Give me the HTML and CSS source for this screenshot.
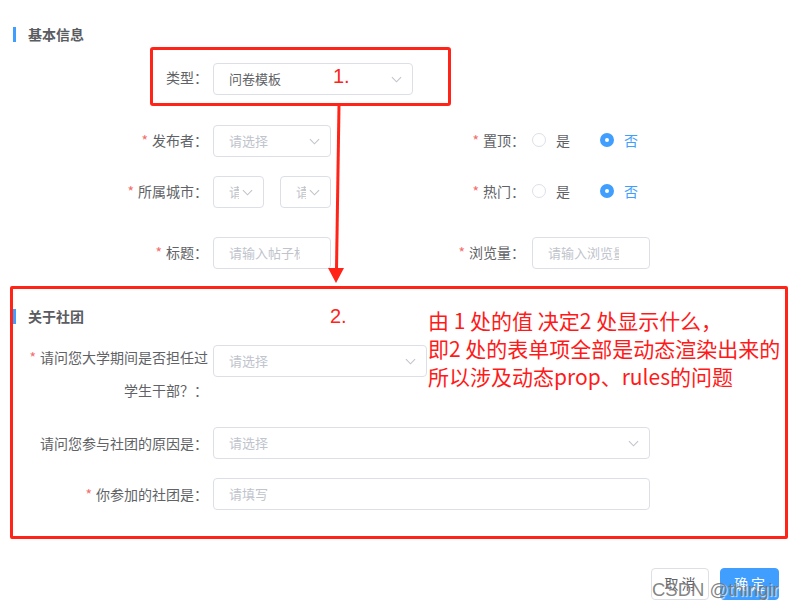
FILE: index.html
```html
<!DOCTYPE html>
<html lang="zh-CN">
<head>
  <meta charset="UTF-8">
  <title>动态表单</title>
  <link rel="stylesheet" href="styles.css">
</head>
<body>
  <div class="page">
    <div class="section-title">基本信息</div>

    <div class="type-box">
      <label class="label type-label">类型：</label>
      <div class="select w-200">
        <span class="value">问卷模板</span>
        <svg class="arrow" viewBox="0 0 12 7"><polyline points="1,1 6,6 11,1"/></svg>
      </div>
    </div>

    <div class="row gap-19">
      <div class="item left">
        <label class="label"><i class="req">*</i>发布者：</label>
        <div class="select w-118">
          <span class="placeholder">请选择</span>
          <svg class="arrow" viewBox="0 0 12 7"><polyline points="1,1 6,6 11,1"/></svg>
        </div>
      </div>
      <div class="item right">
        <label class="label"><i class="req">*</i>置顶：</label>
        <div class="radios">
          <span class="radio"><span class="dot"></span>是</span>
          <span class="radio checked"><span class="dot"></span>否</span>
        </div>
      </div>
    </div>

    <div class="row gap-19">
      <div class="item left">
        <label class="label"><i class="req">*</i>所属城市：</label>
        <div class="select w-51">
          <span class="placeholder">请选择</span>
          <svg class="arrow" viewBox="0 0 12 7"><polyline points="1,1 6,6 11,1"/></svg>
        </div>
        <div class="select w-51 ml-16">
          <span class="placeholder">请选择</span>
          <svg class="arrow" viewBox="0 0 12 7"><polyline points="1,1 6,6 11,1"/></svg>
        </div>
      </div>
      <div class="item right">
        <label class="label"><i class="req">*</i>热门：</label>
        <div class="radios">
          <span class="radio"><span class="dot"></span>是</span>
          <span class="radio checked"><span class="dot"></span>否</span>
        </div>
      </div>
    </div>

    <div class="row gap-29">
      <div class="item left">
        <label class="label"><i class="req">*</i>标题：</label>
        <div class="input w-118"><span class="placeholder">请输入帖子标题</span></div>
      </div>
      <div class="item right">
        <label class="label"><i class="req">*</i>浏览量：</label>
        <div class="input w-118"><span class="placeholder">请输入浏览量</span></div>
      </div>
    </div>

    <div class="club-box">
      <div class="section-title inner">关于社团</div>

      <div class="row club-row first">
        <label class="label club-label tall"><i class="req">*</i>请问您大学期间是否担任过<br>学生干部？：</label>
        <div class="select w-214">
          <span class="placeholder">请选择</span>
          <svg class="arrow" viewBox="0 0 12 7"><polyline points="1,1 6,6 11,1"/></svg>
        </div>
      </div>

      <div class="row club-row">
        <label class="label club-label">请问您参与社团的原因是：</label>
        <div class="select w-437">
          <span class="placeholder">请选择</span>
          <svg class="arrow" viewBox="0 0 12 7"><polyline points="1,1 6,6 11,1"/></svg>
        </div>
      </div>

      <div class="row club-row">
        <label class="label club-label"><i class="req">*</i>你参加的社团是：</label>
        <div class="input w-437"><span class="placeholder">请填写</span></div>
      </div>
    </div>

    <div class="actions">
      <button class="btn">取 消</button>
      <button class="btn primary">确 定</button>
    </div>

    <!-- annotations drawn over the form -->
    <svg class="pointer" width="795" height="612" viewBox="0 0 795 612">
      <line x1="339" y1="105" x2="336.5" y2="270" stroke="#ff2318" stroke-width="3"/>
      <polygon points="328,268 344,268 336,283" fill="#ff2318"/>
    </svg>
    <span class="mark mark-1">1.</span>
    <span class="mark mark-2">2.</span>
    <p class="note">由 1 处的值 决定2 处显示什么，<br>即2 处的表单项全部是动态渲染出来的<br>所以涉及动态prop、rules的问题</p>
    <span class="watermark">CSDN @thingir</span>
  </div>
</body>
</html>
```

FILE: styles.css
```css
body {
  margin: 0;
  background: #fff;
  font-family: "Noto Sans CJK SC", "Noto Sans", sans-serif;
  color: #606266;
}
.page {
  position: relative;
  width: 795px;
  height: 612px;
  overflow: hidden;
}
.section-title {
  margin: 27px 0 0 13px;
  height: 15px;
  line-height: 14px;
  border-left: 3px solid #409eff;
  padding-left: 12px;
  font-size: 14px;
  font-weight: bold;
  color: #5a5c61;
}
.section-title.inner {
  margin: 20px 0 0 0;
}

/* form rows */
.type-box {
  box-sizing: border-box;
  margin: 5px 0 0 150px;
  width: 301px;
  height: 59px;
  border: 3px solid #ff2318;
  border-radius: 3px;
  display: flex;
  align-items: flex-start;
  padding: 13px 0 0 0;
}
.row {
  display: flex;
  height: 32px;
}
.gap-19 { margin-top: 19px; }
.gap-29 { margin-top: 29px; }
.item {
  display: flex;
  align-items: center;
}
.label {
  box-sizing: border-box;
  flex: 0 0 auto;
  text-align: right;
  font-size: 14px;
  line-height: 32px;
  padding-right: 5px;
  padding-bottom: 3px;
  color: #606266;
}
.type-label { width: 60px; line-height: 28px; padding-bottom: 0; }
.left .label { width: 213px; }
.right .label { width: 201px; padding-right: 7px; }
.req {
  font-style: normal;
  color: #f56c6c;
  margin-right: 4px;
}

/* selects and inputs */
.select, .input {
  box-sizing: border-box;
  position: relative;
  height: 32px;
  border: 1px solid #dcdfe6;
  border-radius: 4px;
  display: flex;
  align-items: center;
  padding: 0 30px 2px 15px;
  font-size: 13px;
  overflow: hidden;
  background: #fff;
}
.placeholder, .value {
  white-space: nowrap;
  overflow: hidden;
  flex: 1;
  min-width: 0;
}
.placeholder { color: #c0c4cc; }
.value { color: #606266; }
.arrow {
  position: absolute;
  right: 10px;
  top: 12px;
  width: 11px;
  height: 7px;
  fill: none;
  stroke: #c0c4cc;
  stroke-width: 1.2;
}
.w-51 { width: 51px; padding-right: 24px; }
.ml-16 { margin-left: 16px; }
.w-118 { width: 118px; }
.w-200 { width: 200px; }
.w-214 { width: 214px; }
.w-437 { width: 437px; }

/* radios */
.radios {
  display: flex;
  align-items: center;
  font-size: 14px;
  padding-bottom: 2px;
}
.radio {
  display: flex;
  align-items: center;
  margin-right: 30px;
  color: #606266;
}
.dot {
  box-sizing: border-box;
  width: 14px;
  height: 14px;
  border: 1px solid #dcdfe6;
  border-radius: 50%;
  margin-right: 10px;
}
.radio.checked { color: #409eff; }
.radio.checked .dot {
  border: 5px solid #409eff;
  background: #fff;
}

/* club section */
.club-box {
  box-sizing: border-box;
  margin: 17px 0 0 10px;
  width: 778px;
  height: 253px;
  border: 3px solid #ff2318;
  border-radius: 2px;
}
.club-row { margin-top: 19px; }
.club-row.first { margin-top: 21px; height: 63px; }
.club-label { width: 200px; }
.tall {
  line-height: 33px;
  margin-top: -4px;
  padding-bottom: 0;
}

/* footer buttons */
.actions {
  display: flex;
  justify-content: flex-end;
  gap: 11px;
  margin: 29px 16px 0 0;
}
.btn {
  box-sizing: border-box;
  height: 32px;
  padding: 0 0 3px;
  width: 58px;
  border: 1px solid #dcdfe6;
  border-radius: 4px;
  background: #fff;
  color: #606266;
  font-family: inherit;
  font-size: 14px;
}
.btn.primary {
  width: 59px;
  border-color: #409eff;
  background: #409eff;
  color: #fff;
}

/* annotations */
.pointer {
  position: absolute;
  left: 0;
  top: 0;
}
.mark {
  position: absolute;
  font-family: "Liberation Sans", sans-serif;
  font-size: 20px;
  line-height: 20px;
  color: #ff2318;
}
.mark-1 { left: 333px; top: 66px; }
.mark-2 { left: 330px; top: 306px; }
.note {
  position: absolute;
  left: 428px;
  top: 306px;
  margin: 0;
  font-size: 21px;
  line-height: 28px;
  color: #ff1a1a;
}
.watermark {
  position: absolute;
  left: 652px;
  top: 579px;
  font-family: "Liberation Sans", sans-serif;
  font-size: 18.5px;
  line-height: 22px;
  color: rgba(110, 110, 110, 0.85);
  text-shadow: 1px 1px 1px rgba(255, 255, 255, 0.8);
}
```
